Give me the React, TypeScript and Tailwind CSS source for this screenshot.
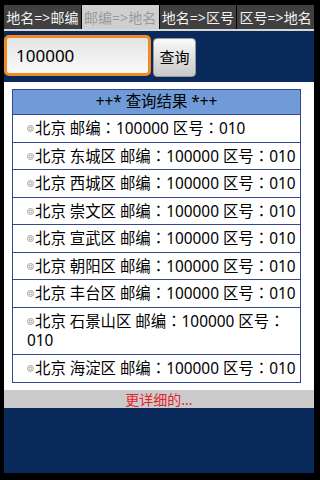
import React from "react";

const font = { fontFamily: '"Noto Sans", "Noto Sans CJK SC", sans-serif' };
const tc = { fontFamily: '"Noto Sans CJK TC", sans-serif' };

const rows = [
  ["北京 邮编", "100000 区号", "010"],
  ["北京 东城区 邮编", "100000 区号", "010"],
  ["北京 西城区 邮编", "100000 区号", "010"],
  ["北京 崇文区 邮编", "100000 区号", "010"],
  ["北京 宣武区 邮编", "100000 区号", "010"],
  ["北京 朝阳区 邮编", "100000 区号", "010"],
  ["北京 丰台区 邮编", "100000 区号", "010"],
  ["北京 石景山区 邮编", "100000 区号", "010"],
  ["北京 海淀区 邮编", "100000 区号", "010"],
];

function Bullet() {
  return (
    <svg width="7" height="7" viewBox="0 0 7 7" className="inline-block mr-[1px] align-[2px]">
      <circle cx="3.5" cy="3.5" r="3" fill="none" stroke="#9a9a9a" strokeWidth="0.9" />
      <circle cx="3.5" cy="3.5" r="1.4" fill="none" stroke="#9a9a9a" strokeWidth="0.9" />
    </svg>
  );
}

function Colon() {
  return <span style={tc} className="leading-[0]">：</span>;
}

export default function App() {
  const tabs = ["地名=>邮编", "邮编=>地名", "地名=>区号", "区号=>地名"];
  return (
    <div className="w-[320px] h-[480px] bg-black pl-[4px] pr-[6px] pt-[5px] pb-[7px] flex flex-col overflow-hidden" style={font}>
      <div className="flex gap-px h-[24px]">
        {tabs.map((t, i) => (
          <div
            key={t}
            className={
              "flex-1 flex items-center justify-center text-[14px] " +
              (i === 1 ? "bg-[#cfcfcf] text-[#9a9a9a]" : "bg-[#404040] text-[#f2f2f2]")
            }
          >
            {t}
          </div>
        ))}
      </div>
      <div className="h-[2px] bg-[#d8d8d8]" />
      <div className="flex-1 bg-[#0b2a5c] flex flex-col">
        <div className="flex items-start pt-[4px] h-[51px]">
          <div className="w-[147px] h-[41px] rounded-[5px] border-[3px] border-[#f08a24] bg-gradient-to-b from-[#e4e4e4] to-[#fafafa] flex items-center pl-[9px] text-[17px] text-black">
            100000
          </div>
          <div className="ml-[2px] mt-[3px] w-[43px] h-[39px] rounded-[4px] border border-[#9a9a9a] bg-gradient-to-b from-[#fafafa] to-[#c8c8c8] flex items-center justify-center text-[15px] text-black">
            查询
          </div>
        </div>
        <div className="bg-white h-[308px] pt-[7px] pl-[8px] pr-[13px]">
          <div className="border border-[#34478f] text-[15.4px] text-black">
            <div className="bg-[#6f9cd9] h-[25px] flex items-center justify-center border-b border-[#34478f]">
              ++* 查询结果 *++
            </div>
            {rows.map((r, i) => (
              <div
                key={i}
                className={
                  "pl-[14px] pr-0 py-[4px] leading-[19px] overflow-hidden " +
                  (i === 7 ? "h-[47px] " : "h-[27.5px] ") +
                  (i < rows.length - 1 ? "border-b border-[#34478f]" : "")
                }
              >
                <Bullet />
                {r[0]}
                <Colon />
                {r[1]}
                <Colon />
                {r[2]}
              </div>
            ))}
          </div>
        </div>
        <div className="h-[18px] bg-[#cbcbcb] flex items-center justify-center text-[14px] text-[#e8202a]">
          更详细的...
        </div>
      </div>
    </div>
  );
}
